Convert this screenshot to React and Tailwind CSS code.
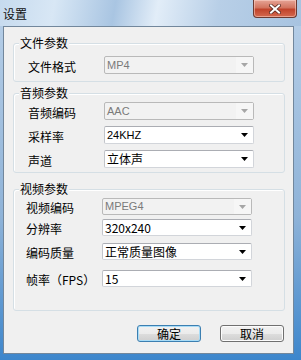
import { useState } from "react";

const font = { fontFamily: '"Noto Sans CJK SC", "Liberation Sans", sans-serif' };

function Arrow({ disabled }) {
  return (
    <svg width="7" height="4" viewBox="0 0 7 4">
      <path d="M0 0 H7 L3.5 4 Z" fill={disabled ? "#a6a6a6" : "#000"} />
    </svg>
  );
}

function Combo({ value, disabled, h = "h-[18px]", mono }) {
  return (
    <div
      className={`w-[150px] ${h} flex items-center border rounded-[2px] ${
        disabled
          ? "bg-[#f2f2f2] border-[#b9b9b9] text-[#7a7a7a]"
          : "bg-white border-[#d2d5da] border-t-[#abadb3] border-l-[#c2c5ca] text-black"
      }`}
    >
      <span
        className={`flex-1 pl-[2px] leading-none ${mono ? "text-[11px]" : "text-[12px]"}`}
        style={mono ? { fontFamily: '"Liberation Sans", sans-serif' } : font}
      >
        {value}
      </span>
      <span
        className={`w-[17px] h-full flex items-center justify-center ${
          disabled ? "bg-[#f6f6f6]" : ""
        }`}
      >
        <Arrow disabled={disabled} />
      </span>
    </div>
  );
}

function Row({ label, className = "", labelW = "w-[76px]", indent = "ml-[9px]", children }) {
  return (
    <div className={`flex items-center ${indent} ${className}`}>
      <span className={`${labelW} text-[12px] leading-[14px] pt-[3px] text-black`} style={font}>
        {label}
      </span>
      {children}
    </div>
  );
}

function Group({ title, className = "", children }) {
  return (
    <fieldset
      className={`mx-[9px] mr-[8px] border border-[#d5dfe5] rounded-[3px] pl-[5px] shadow-[inset_1px_1px_0_#ffffff] ${className}`}
    >
      <legend
        className="px-[1px] bg-[#f0f0f0] text-[12px] leading-[14px] text-black"
        style={font}
      >
        {title}
      </legend>
      {children}
    </fieldset>
  );
}

export default function App() {
  const [values] = useState({
    format: "MP4",
    audioCodec: "AAC",
    rate: "24KHZ",
    channel: "立体声",
    videoCodec: "MPEG4",
    size: "320x240",
    quality: "正常质量图像",
    fps: "15",
  });

  return (
    <div className="w-[301px] h-[360px] flex flex-col overflow-hidden bg-[linear-gradient(180deg,#b9d0e8_0%,#8fb3d8_60%,#3d86cc_100%)]">
      <div className="h-[26px] flex items-start shrink-0 bg-[linear-gradient(100deg,#c6daee_0%,#d8e7f5_18%,#a9c5e2_38%,#e2edf8_52%,#b8cfe7_72%,#a7c3e0_100%)]">
        <span className="pl-[3px] pt-[7px] text-[12px] leading-[14px] text-[#111]" style={font}>
          设置
        </span>
        <button className="ml-auto mr-[4px] w-[44px] h-[18px] flex items-center justify-center rounded-b-[4px] border border-t-0 border-[#6b3a32] bg-[linear-gradient(180deg,#e6a496_0%,#d2745f_45%,#c1432b_55%,#d4694f_100%)] shadow-[inset_0_0_0_1px_rgba(255,220,210,0.5)]">
          <svg width="12" height="10" viewBox="0 0 12 10">
            <path d="M2 1.5 L10 8.5 M10 1.5 L2 8.5" stroke="#5a2a22" strokeWidth="3.6" strokeLinecap="square" />
            <path d="M2 1.5 L10 8.5 M10 1.5 L2 8.5" stroke="#ffffff" strokeWidth="2" strokeLinecap="square" />
          </svg>
        </button>
      </div>

      <div className="flex-1 flex pl-[3px] pr-[7px] pb-[6px]">
        <div className="flex-1 flex flex-col bg-[#f0f0f0] border border-[#72879c]">
          <Group title="文件参数" className="mt-[9px] pb-[7px]">
            <Row label="文件格式" className="mt-[6px]">
              <Combo value={values.format} disabled mono />
            </Row>
          </Group>

          <Group title="音频参数" className="mt-[4px] pb-[4px]">
            <Row label="音频编码" className="mt-[2px]">
              <Combo value={values.audioCodec} disabled mono />
            </Row>
            <Row label="采样率" className="mt-[6px]">
              <Combo value={values.rate} mono />
            </Row>
            <Row label="声道" className="mt-[6px]">
              <Combo value={values.channel} />
            </Row>
          </Group>

          <Group title="视频参数" className="mt-[9px] pb-[23px]">
            <Row label="视频编码" indent="ml-[7px]" className="mt-[2px]">
              <Combo value={values.videoCodec} disabled mono h="h-[17px]" />
            </Row>
            <Row label="分辨率" indent="ml-[7px]" className="mt-[4px]">
              <Combo value={values.size} h="h-[17px]" />
            </Row>
            <Row label="编码质量" indent="ml-[7px]" className="mt-[7px]">
              <Combo value={values.quality} h="h-[17px]" />
            </Row>
            <Row label="帧率（FPS）" indent="ml-[7px]" className="mt-[10px]">
              <Combo value={values.fps} h="h-[17px]" />
            </Row>
          </Group>

          <div className="flex justify-end gap-[19px] pr-[9px] mt-[14px]">
            <button
              className="w-[64px] h-[17px] rounded-[3px] border border-[#3c7fb1] text-[12px] leading-none text-black bg-[linear-gradient(180deg,#f2f2f2_0%,#ebebeb_50%,#dddddd_51%,#cfcfcf_100%)] shadow-[inset_0_0_0_1px_#a8dcf7]"
              style={font}
            >
              确定
            </button>
            <button
              className="w-[64px] h-[17px] rounded-[3px] border border-[#707070] text-[12px] leading-none text-black bg-[linear-gradient(180deg,#f2f2f2_0%,#ebebeb_50%,#dddddd_51%,#cfcfcf_100%)] shadow-[inset_0_0_0_1px_#fcfcfc]"
              style={font}
            >
              取消
            </button>
          </div>
        </div>
      </div>
    </div>
  );
}
